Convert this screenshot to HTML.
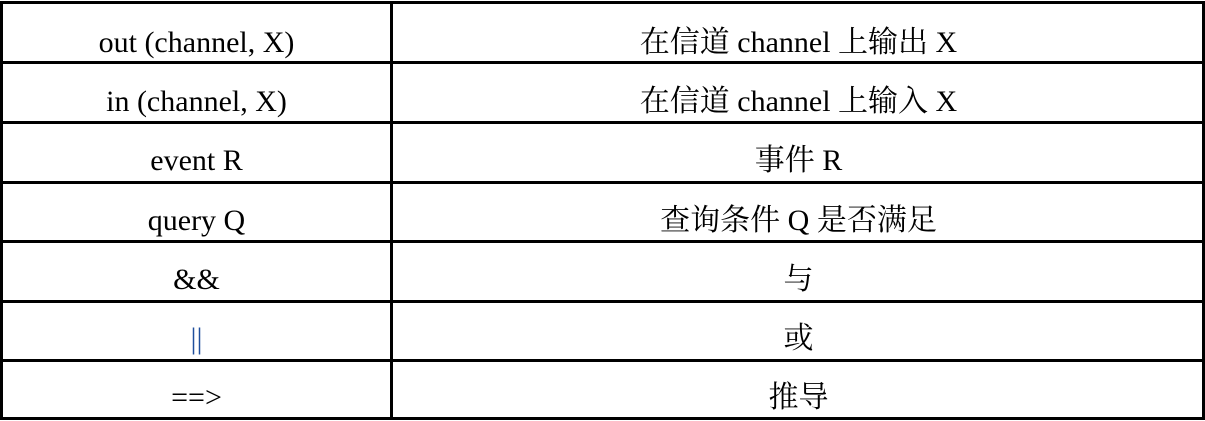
<!DOCTYPE html>
<html><head><meta charset="utf-8"><style>
body{margin:0;width:1205px;height:421px;background:#fff;position:relative;overflow:hidden;font-family:"Liberation Serif","Noto Serif CJK SC","Noto Sans CJK SC",serif;font-size:30px;color:#000}
.h{position:absolute;left:0;width:1205px;height:3px;background:#000}
.v{position:absolute;top:2px;height:418px;width:3px;background:#000}
.t{position:absolute;line-height:30px;text-align:center;white-space:nowrap}
.l{left:2px;width:389px}
.r{left:394px;width:809px}
</style></head><body>
<div class="h" style="top:1px"></div>
<div class="h" style="top:61px"></div>
<div class="h" style="top:121px"></div>
<div class="h" style="top:181px"></div>
<div class="h" style="top:240px"></div>
<div class="h" style="top:300px"></div>
<div class="h" style="top:359px"></div>
<div class="h" style="top:417px"></div>
<div class="v" style="left:0"></div>
<div class="v" style="left:390px"></div>
<div class="v" style="left:1202px"></div>

<div class="t l" style="top:28px">out (channel, X)</div>
<div class="t r" style="top:28px">在信道 channel 上输出 X</div>
<div class="t l" style="top:87px">in (channel, X)</div>
<div class="t r" style="top:87px">在信道 channel 上输入 X</div>
<div class="t l" style="top:146px">event R</div>
<div class="t r" style="top:146px">事件 R</div>
<div class="t l" style="top:206px">query Q</div>
<div class="t r" style="top:206px">查询条件 Q 是否满足</div>
<div class="t l" style="top:265px">&amp;&amp;</div>
<div class="t r" style="top:265px">与</div>
<div class="t l" style="top:324px;color:#1f4e9c">||</div>
<div class="t r" style="top:324px">或</div>
<div class="t l" style="top:383px">==&gt;</div>
<div class="t r" style="top:383px">推导</div>
</body></html>
